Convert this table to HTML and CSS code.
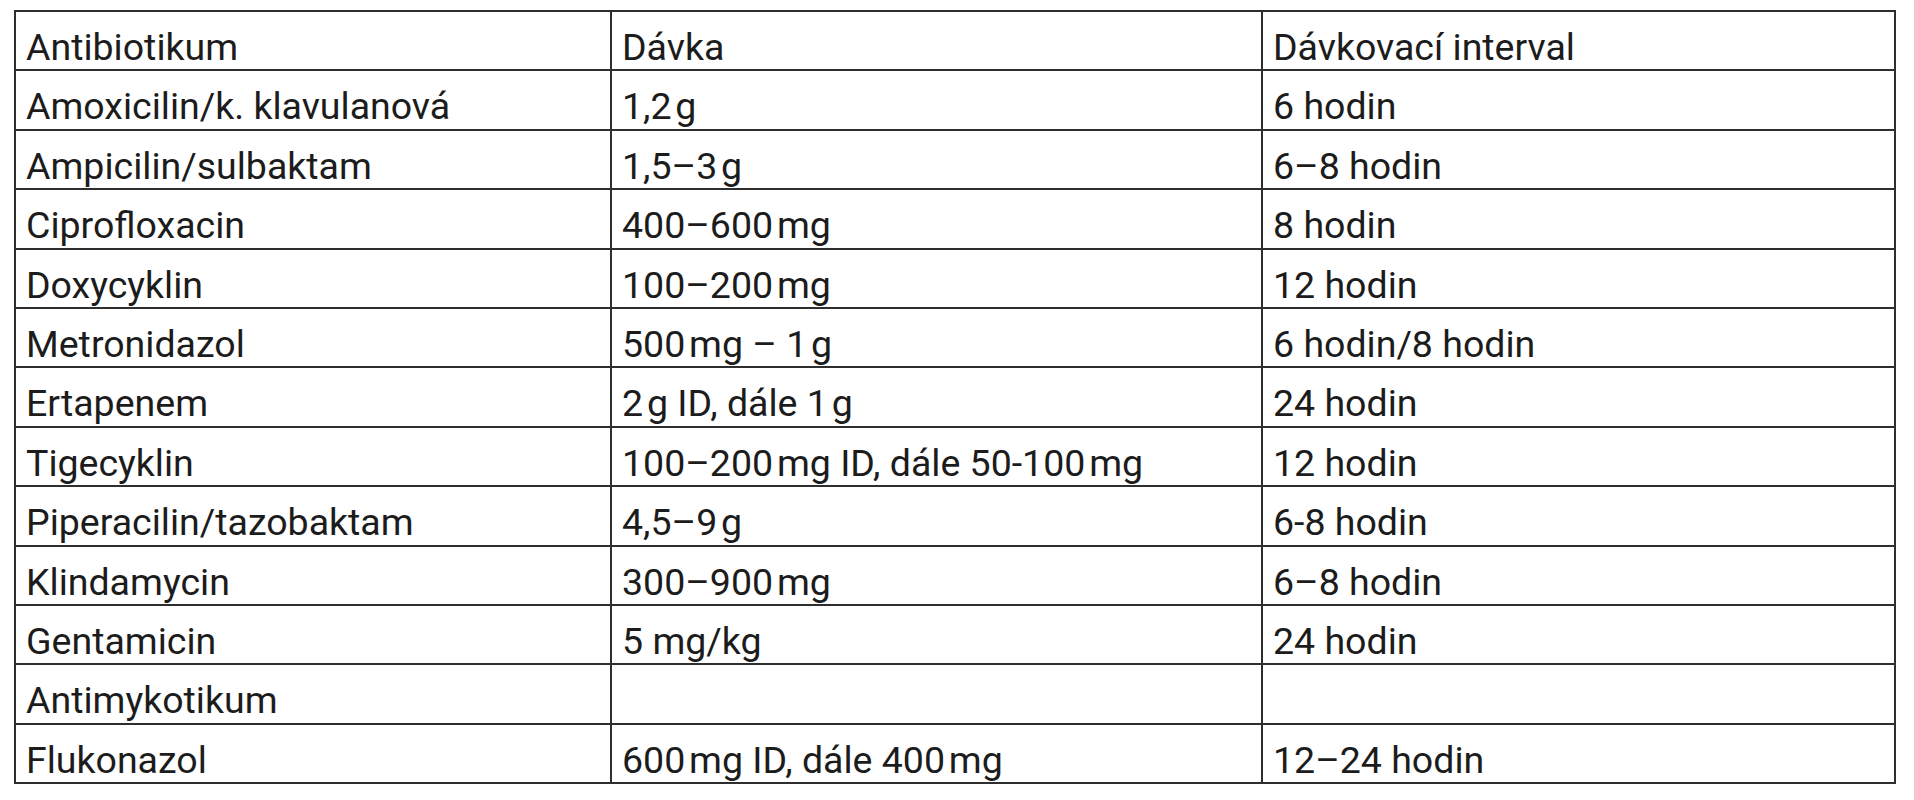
FILE: index.html
```html
<!DOCTYPE html>
<html lang="cs">
<head>
<meta charset="utf-8">
<title>Antibiotika</title>
<link rel="stylesheet" href="styles.css">
</head>
<body>
<table class="dose-table">
  <colgroup>
    <col class="c1">
    <col class="c2">
    <col class="c3">
  </colgroup>
  <tbody>
    <tr><td>Antibiotikum</td><td>Dávka</td><td>Dávkovací interval</td></tr>
    <tr><td>Amoxicilin/k. klavulanová</td><td>1,2&#8202;g</td><td>6 hodin</td></tr>
    <tr><td>Ampicilin/sulbaktam</td><td>1,5–3&#8202;g</td><td>6–8 hodin</td></tr>
    <tr><td>Ciprofloxacin</td><td>400–600&#8202;mg</td><td>8 hodin</td></tr>
    <tr><td>Doxycyklin</td><td>100–200&#8202;mg</td><td>12 hodin</td></tr>
    <tr><td>Metronidazol</td><td>500&#8202;mg – 1&#8202;g</td><td>6 hodin/8 hodin</td></tr>
    <tr><td>Ertapenem</td><td>2&#8202;g ID, dále 1&#8202;g</td><td>24 hodin</td></tr>
    <tr><td>Tigecyklin</td><td>100–200&#8202;mg ID, dále 50-100&#8202;mg</td><td>12 hodin</td></tr>
    <tr><td>Piperacilin/tazobaktam</td><td>4,5–9&#8202;g</td><td>6-8 hodin</td></tr>
    <tr><td>Klindamycin</td><td>300–900&#8202;mg</td><td>6–8 hodin</td></tr>
    <tr><td>Gentamicin</td><td>5 mg/kg</td><td>24 hodin</td></tr>
    <tr><td>Antimykotikum</td><td></td><td></td></tr>
    <tr><td>Flukonazol</td><td>600&#8202;mg ID, dále 400&#8202;mg</td><td>12–24 hodin</td></tr>
  </tbody>
</table>
</body>
</html>
```

FILE: styles.css
```css
html, body {
  margin: 0;
  padding: 0;
  background: #ffffff;
}

body {
  padding: 10px 0 0 14px;
  font-family: Roboto, "Liberation Sans", sans-serif;
  color: #1c1c1c;
}

.dose-table {
  border-collapse: collapse;
  width: 1880px;
  table-layout: fixed;
}

.c1 { width: 596px; }
.c2 { width: 651px; }
.c3 { width: 633px; }

.dose-table td {
  border: 2px solid #2e2e2e;
  font-size: 37.5px;
  line-height: 44.4px;
  padding: 13px 9px 0 10px;
  vertical-align: bottom;
  white-space: nowrap;
}
```
